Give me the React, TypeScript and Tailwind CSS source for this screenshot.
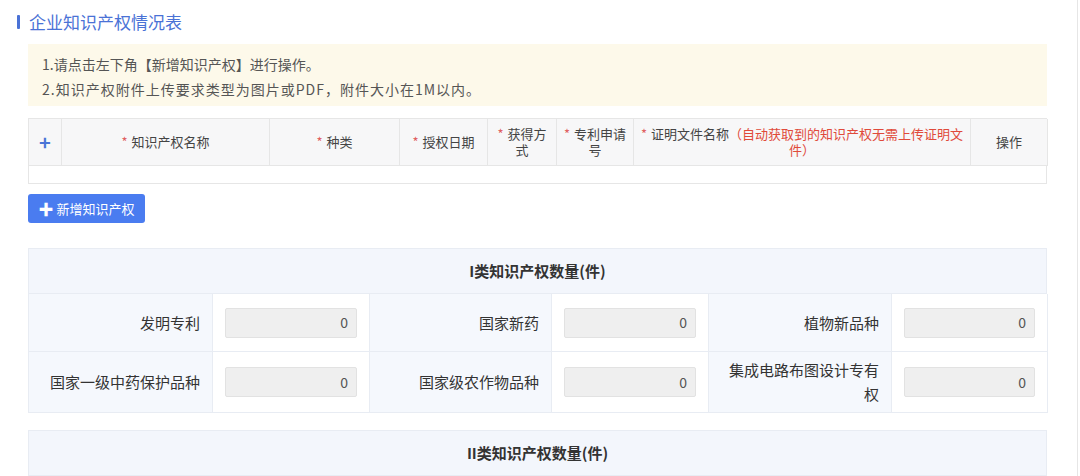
import React from "react";

const font = { fontFamily: '"Noto Sans CJK SC", "Noto Sans", sans-serif' };

function Req({ children }: { children: React.ReactNode }) {
  return (
    <span>
      <span className="text-[#e06060] mr-1">*</span>
      {children}
    </span>
  );
}

function Cell({ label }: { label: string }) {
  return (
    <>
      <div className="bg-[#f5f8fd] border-r border-b border-[#e8ecf3] flex items-center justify-end pr-3 pl-2 text-[15px] text-[#333] text-right leading-[24px]">
        {label}
      </div>
      <div className="bg-white border-r border-b border-[#e8ecf3] flex items-center px-3">
        <div className="w-full h-[30px] bg-[#efefef] border border-[#e2e2e2] rounded-[2px] flex items-center justify-end pr-2 text-[14px] text-[#555]">
          0
        </div>
      </div>
    </>
  );
}

export default function App() {
  return (
    <div className="w-[1080px] h-[476px] overflow-hidden bg-white relative" style={font}>
      <div className="absolute top-0 bottom-0 left-[1077px] w-px bg-[#e6e6e6]" />
      <div className="w-[1047px] pl-[17px] pt-[13px]">
        <div className="flex items-center h-[18px]">
          <div className="w-[3px] h-[14px] bg-[#4a72d6] rounded-[1px]" />
          <div className="ml-[9px] text-[17px] text-[#4a72d6] leading-[18px]">企业知识产权情况表</div>
        </div>
      </div>
      <div className="ml-[28px] w-[1019px]">
        <div className="mt-[13px] h-[62px] bg-[#fdf9ea] px-[14px] pt-[8px] text-[14px] text-[#555] leading-[25px]">
          <div>1.请点击左下角【新增知识产权】进行操作。</div>
          <div className="tracking-[1px]">2.知识产权附件上传要求类型为图片或PDF，附件大小在1M以内。</div>
        </div>

        <div className="mt-[12px] border border-[#e6e6e6] border-r-0">
          <div className="grid grid-cols-[33px_208px_130px_88px_69px_77px_337px_77px] h-[47px] bg-[#f7f7f8] text-[13px] text-[#444] leading-[16px]">
            <div className="flex items-center justify-center border-r border-b border-[#e6e6e6] text-[#4a74d6] text-[20px] font-bold">+</div>
            <div className="flex items-center justify-center border-r border-b border-[#e6e6e6]"><Req>知识产权名称</Req></div>
            <div className="flex items-center justify-center border-r border-b border-[#e6e6e6]"><Req>种类</Req></div>
            <div className="flex items-center justify-center border-r border-b border-[#e6e6e6]"><Req>授权日期</Req></div>
            <div className="flex items-center justify-center border-r border-b border-[#e6e6e6] px-[8px] text-center"><Req>获得方式</Req></div>
            <div className="flex items-center justify-center border-r border-b border-[#e6e6e6] px-[6px] text-center"><Req>专利申请号</Req></div>
            <div className="flex items-center justify-center border-r border-b border-[#e6e6e6] px-[5px] text-center">
              <span>
                <span className="text-[#e06060] mr-1">*</span>证明文件名称
                <span className="text-[#e04a3a]">（自动获取到的知识产权无需上传证明文件）</span>
              </span>
            </div>
            <div className="flex items-center justify-center border-r border-b border-[#e6e6e6]">操作</div>
          </div>
          <div className="h-[17px] border-r border-[#e6e6e6]" />
        </div>

        <button className="mt-[10px] w-[117px] h-[29px] bg-[#4a7cf0] rounded-[3px] text-white text-[13px] flex items-center justify-center gap-[3px]">
          <span className="font-bold text-[15px] leading-none">✚</span>
          <span>新增知识产权</span>
        </button>

        <div className="mt-[25px] border-t border-l border-[#e8ecf3]">
          <div className="h-[45px] bg-[#f3f6fc] border-r border-b border-[#e8ecf3] flex items-center justify-center text-[15px] font-bold text-[#333]">
            I类知识产权数量(件)
          </div>
          <div className="grid grid-cols-[184px_157px_182px_157px_183px_156px] grid-rows-[58px_61px]">
            <Cell label="发明专利" />
            <Cell label="国家新药" />
            <Cell label="植物新品种" />
            <Cell label="国家一级中药保护品种" />
            <Cell label="国家级农作物品种" />
            <Cell label="集成电路布图设计专有权" />
          </div>
        </div>

        <div className="mt-[17px] border-t border-l border-[#e8ecf3]">
          <div className="h-[45px] bg-[#f3f6fc] border-r border-b border-[#e8ecf3] flex items-center justify-center text-[15px] font-bold text-[#333]">
            II类知识产权数量(件)
          </div>
        </div>
      </div>
    </div>
  );
}
